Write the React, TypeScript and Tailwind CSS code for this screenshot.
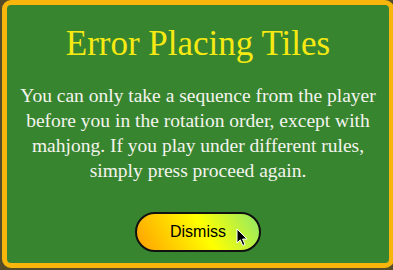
import React from "react";

export default function App() {
  return (
    <div className="w-[393px] h-[270px] bg-[#544c28] overflow-hidden pl-[2px]">
      <div className="relative w-[392px] h-[268px] rounded-[9px] border-[5px] border-[#f8b60d] bg-[#388530] flex flex-col items-center">
        <h1 className="mt-[19px] font-['Liberation_Serif','Times_New_Roman',serif] text-[35px] leading-[40px] text-[#f7ea12] whitespace-nowrap">
          Error Placing Tiles
        </h1>
        <p className="mt-[19px] w-[370px] font-['Liberation_Serif','Times_New_Roman',serif] text-center text-[19.5px] leading-[25px] text-[#f4f4ee]">
          You can only take a sequence from the player before you in the rotation order, except with mahjong. If you play under different rules, simply press proceed again.
        </p>
        <button className="mt-[29px] w-[126px] h-[40px] rounded-full border-2 border-[#111] font-['Liberation_Sans',Arial,sans-serif] text-[16px] text-black bg-[linear-gradient(60deg,#ff9f00_0%,#ffff00_55%,#8fe868_100%)]">
          Dismiss
        </button>
        <svg
          className="absolute left-[229px] top-[223px]"
          width="13"
          height="19"
          viewBox="0 0 13 19"
        >
          <path
            d="M1 1 L1 15 L4.3 11.8 L6.8 17.5 L9 16.5 L6.6 11 L11 11 Z"
            fill="#000"
            stroke="#fff"
            strokeWidth="1"
            strokeLinejoin="round"
          />
        </svg>
      </div>
    </div>
  );
}
